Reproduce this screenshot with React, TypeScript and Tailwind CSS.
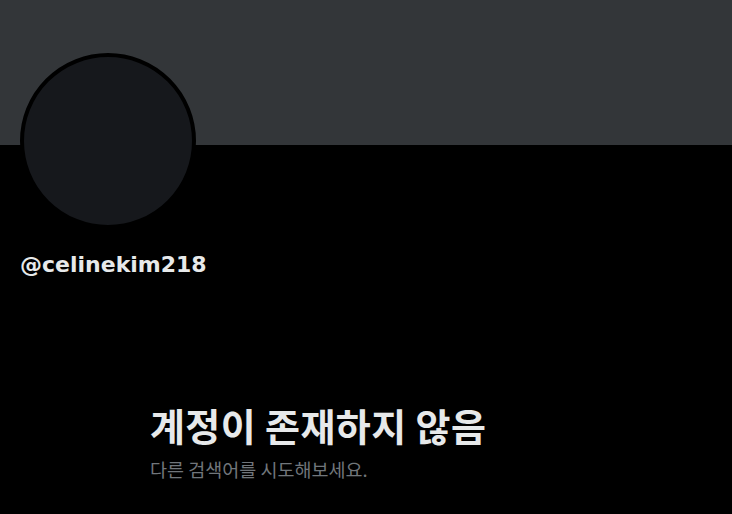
export default function App() {
  return (
    <div className="min-h-screen w-full bg-black text-[#e7e9ea]" style={{ fontFamily: '"Noto Sans", "Noto Sans CJK KR", sans-serif' }}>
      {/* banner */}
      <div className="h-[145px] bg-[#333639]" />

      {/* avatar + handle */}
      <div className="px-5">
        <div className="-mt-[92px] h-[176px] w-[176px] rounded-full border-4 border-black bg-[#16181c]" />
        <div className="mt-[22px] font-['DejaVu_Sans',sans-serif] text-[22px] font-bold leading-[28px]">@celinekim218</div>
      </div>

      {/* empty state */}
      <div className="mt-[123px] pl-[150px]">
        <h1 className="font-['Noto_Sans_CJK_KR',sans-serif] text-[38px] font-bold leading-[46px] tracking-[0.4px]">계정이 존재하지 않음</h1>
        <p className="mt-[10px] font-['Noto_Sans_CJK_KR',sans-serif] text-[18.5px] leading-[22px] text-[#71767b]">다른 검색어를 시도해보세요.</p>
      </div>
    </div>
  );
}
